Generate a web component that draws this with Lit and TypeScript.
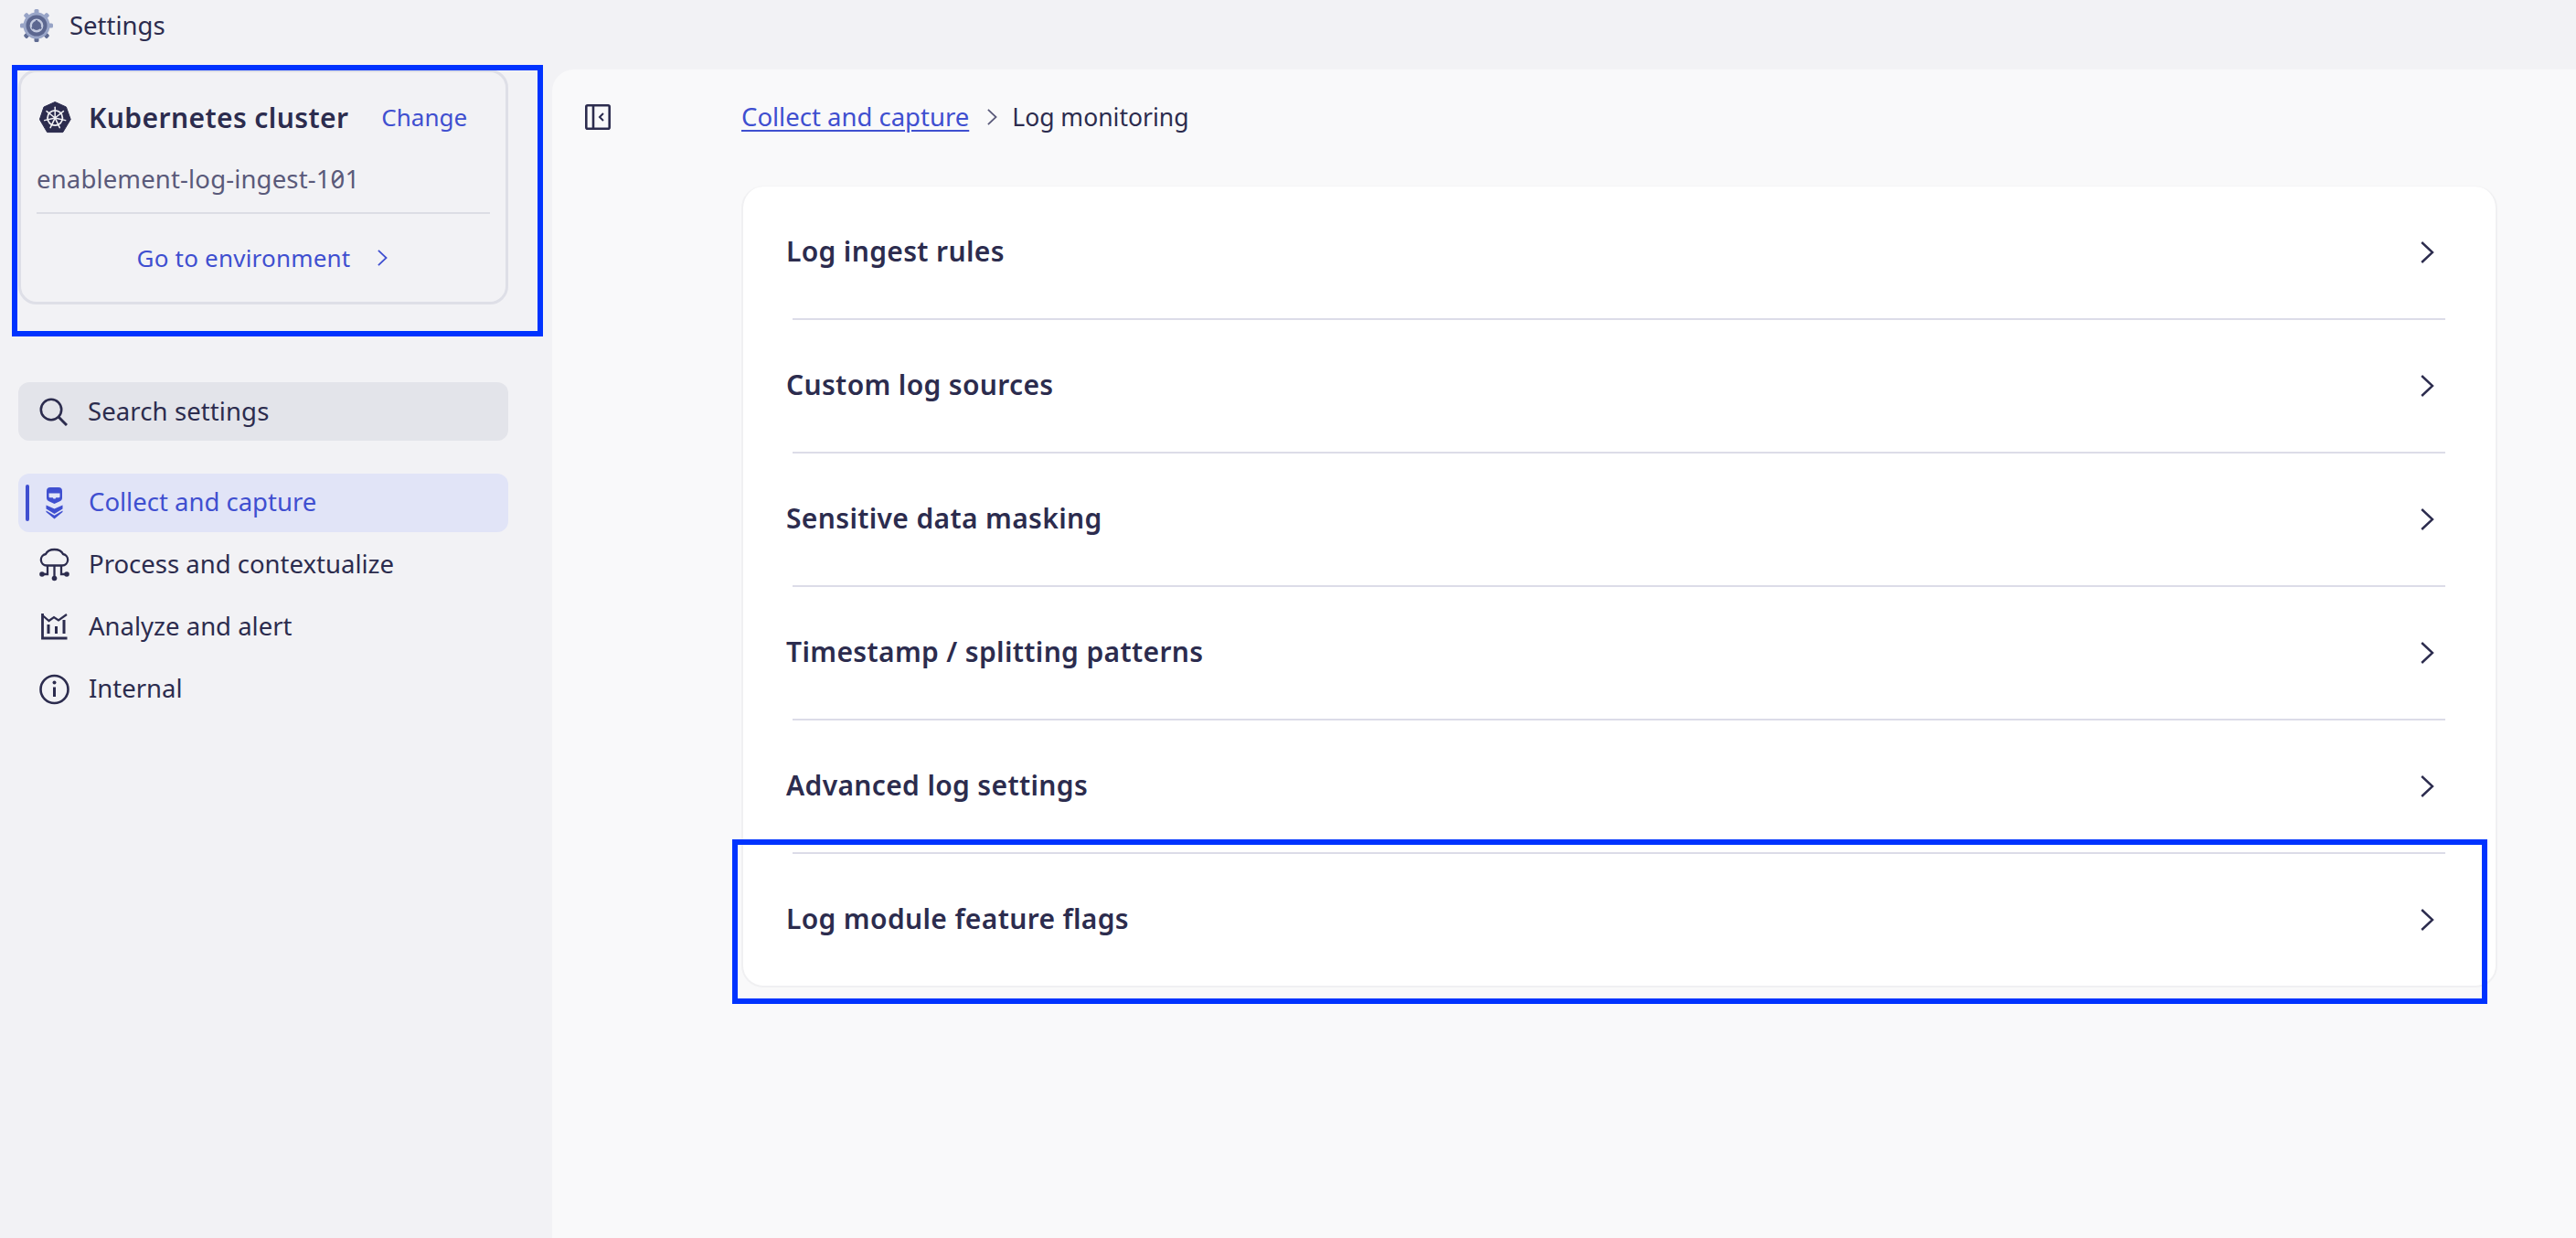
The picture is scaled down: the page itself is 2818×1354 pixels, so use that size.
import { LitElement, html, css, svg } from "lit";
import { customElement } from "lit/decorators.js";

const chevron = (cls: string) => html`<svg class=${cls} viewBox="0 0 15 24" fill="none" stroke="currentColor" stroke-width="2.4"><path d="M1.2 1 L13 12 L1.2 23"/></svg>`;

const gear = svg`<g>
  ${[0, 45, 90, 135, 180, 225, 270, 315].map((a) => svg`<rect x="15.5" y="0" width="5" height="6" rx="1.5" fill=${a > 90 && a < 270 ? "#5f6b92" : "#97a3c6"} transform="rotate(${a} 18 18)"/>`)}
  <circle cx="18" cy="18" r="14.5" fill="#9aa6c8"/>
  <circle cx="18" cy="18" r="11.5" fill="#5c6790"/>
  <circle cx="18" cy="18" r="6.2" fill="none" stroke="#c4cbe0" stroke-width="2.4"/>
  <path d="M18 12v4M12.8 21l3.4-2M23.2 21l-3.4-2" stroke="#5c6790" stroke-width="2.2"/>
</g>`;

const k8s = svg`<path d="M17.2 0.5 L29.4 6 L34.2 19.6 L25.8 33.6 L8.6 33.6 L0.4 19.6 L5 6 Z" fill="#2c2c4e" stroke="#2c2c4e" stroke-linejoin="round"/>
  <circle cx="17.2" cy="18" r="8.2" fill="none" stroke="#f2f2f5" stroke-width="1.8"/>
  <circle cx="17.2" cy="18" r="1.9" fill="#f2f2f5"/>
  <g stroke="#f2f2f5" stroke-width="1.5" stroke-linecap="round">
  ${[0, 51.4, 102.8, 154.3, 205.7, 257.1, 308.6].map((a) => svg`<line x1="17.2" y1="16" x2="17.2" y2="6.2" transform="rotate(${a} 17.2 18)"/>`)}
  </g>`;

const collect = html`<svg class="nav-icon" viewBox="0 0 33 40" fill="currentColor">
  <path fill-rule="evenodd" d="M12 3h9a4 4 0 0 1 4 4v7.500c0 2-1 3-3 4L16.500 21 11 18.500c-2-1-3-2-3-4V7a4 4 0 0 1 4-4zM10.500 9.500v3.500c0 .8.500 1.300 1.300 1.300h3l.7 1.200h2l.7-1.200h3c.8 0 1.300-.5 1.300-1.300V9.500z"/>
  <path d="M7.500 22.500l9 4 9-4v4l-9 5.500-9-5.500z"/>
  <path d="M7.500 28.500l9 5.200 9-5.200v1.500l-9 7.500-9-7.500z"/>
</svg>`;

const cloud = html`<svg class="nav-icon" viewBox="0 0 33 40" fill="none" stroke="currentColor" stroke-width="2.3">
  <path d="M8 20.500A6.300 6.300 0 0 1 7 8C8.500 4.800 12.300 3 16.500 3S24.500 4.800 26 8a6.300 6.300 0 0 1-1 12.500z"/>
  <path d="M16.500 20.500V34M9 20.500V30H3M24 20.500V30h6"/>
  <g fill="currentColor" stroke="none"><circle cx="3" cy="30" r="2.800"/><circle cx="16.500" cy="34.500" r="2.800"/><circle cx="30" cy="30" r="2.800"/></g>
</svg>`;

const chart = html`<svg class="nav-icon" viewBox="0 0 33 40" fill="none" stroke="currentColor" stroke-width="2.400">
  <path d="M3.500 5v27h27" stroke-width="2.800"/>
  <path d="M3.500 7l7 6 5.500-4 5 3.500 9-6.500" stroke-width="2.200"/>
  <path d="M10 17v10M18.500 19v8M27 12v15" stroke-width="3"/>
</svg>`;

const info = html`<svg class="nav-icon" viewBox="0 0 33 40" fill="none" stroke="currentColor" stroke-width="2.600">
  <circle cx="16.500" cy="20" r="15"/>
  <path d="M16.500 17.500V28" stroke-width="3"/>
  <circle cx="16.500" cy="12.500" r="2" fill="currentColor" stroke="none"/>
</svg>`;

const rows = [
  "Log ingest rules",
  "Custom log sources",
  "Sensitive data masking",
  "Timestamp / splitting patterns",
  "Advanced log settings",
  "Log module feature flags",
];

@customElement("app-root")
export class AppRoot extends LitElement {
  static styles = css`
    :host {
      display: block;
      position: relative;
      height: 100vh;
      overflow: hidden;
      background: #f2f2f5;
      color: #2c2c4e;
      font-family: "Noto Sans", sans-serif;
      font-size: 27.5px;
    }
    .top {
      height: 76px;
      box-sizing: border-box;
      display: flex;
      align-items: flex-start;
      padding: 10px 0 0 22px;
      gap: 18px;
    }
    .top svg { width: 36px; height: 36px; flex: none; }
    .top span { line-height: 36px; }
    .body { display: flex; height: calc(100% - 76px); }
    .side {
      width: 604px;
      flex: none;
      box-sizing: border-box;
      padding-left: 20px;
      padding-right: 48px;
    }
    .env {
      height: 257px;
      box-sizing: border-box;
      border: 3px solid #dedfe7;
      border-radius: 20px;
      padding: 29px 17px 0 17px;
    }
    .env-head { display: flex; align-items: center; height: 40px; }
    .env-head svg { width: 35px; height: 35px; margin-left: 3px; flex: none; }
    .env-title { font-weight: 600; font-size: 30px; letter-spacing: 0.4px; margin-left: 19px; white-space: nowrap; }
    .env-change { color: #3f4fd0; font-size: 26px; margin-left: 36px; }
    .env-name { color: #5a5a7a; margin-top: 28px; line-height: 40px; height: 40px; letter-spacing: 0.15px; font-feature-settings: "zero"; }
    .env-line { height: 2px; background: #dcdde4; margin-top: 16px; }
    .env-go {
      display: flex;
      align-items: center;
      justify-content: center;
      color: #3f4fd0;
      font-size: 26px;
      letter-spacing: 0.2px;
      height: 40px;
      margin-top: 28px;
      gap: 30px;
      padding-right: 2px;
    }
    .chev-s { width: 11px; height: 18px; }
    .search {
      margin-top: 85px;
      height: 64px;
      border-radius: 12px;
      background: #e3e4ea;
      display: flex;
      align-items: center;
      padding-left: 23px;
      gap: 22px;
    }
    .search svg { width: 31px; height: 31px; flex: none; }
    .search span, .item span, .row span { margin-bottom: 3px; }
    .search span { letter-spacing: 0.1px; margin-bottom: 2px; }
    .nav { margin-top: 36px; display: flex; flex-direction: column; gap: 4px; }
    .item {
      position: relative;
      height: 64px;
      border-radius: 12px;
      display: flex;
      align-items: center;
      padding-left: 23px;
      gap: 21px;
    }
    .item.active { background: #e1e4f7; color: #3f4fd0; }
    .item.active::before {
      content: "";
      position: absolute;
      left: 8px;
      top: 12px;
      bottom: 12px;
      width: 4px;
      border-radius: 2px;
      background: #3f4fd0;
    }
    .nav-icon { width: 33px; height: 40px; flex: none; }
    .main {
      flex: 1;
      background: #f9f9fa;
      border-top-left-radius: 24px;
      display: flex;
      padding-left: 36px;
    }
    .toggle { width: 171px; flex: none; padding-top: 38px; box-sizing: border-box; }
    .toggle svg { display: block; width: 28px; height: 28px; }
    .content { width: 1921px; flex: none; }
    .crumbs {
      margin-top: 32px;
      height: 40px;
      line-height: 40px;
      display: flex;
      align-items: center;
      white-space: nowrap;
    }
    .crumbs a { color: #3f4fd0; text-decoration: underline; text-underline-offset: 4px; text-decoration-thickness: 2px; }
    .crumbs span { font-size: 26.500px; }
    .crumbs svg { width: 11px; height: 18px; color: #5a5a7a; margin: 0 16px 0 20px; flex: none; }
    .card {
      margin-top: 56px;
      background: #fff;
      border: 2px solid #f0f0f2;
      border-top: 0;
      border-radius: 24px;
      box-shadow: 0 -1px 0 #f5f5f6;
    }
    .row {
      height: 144px;
      display: flex;
      align-items: center;
      justify-content: space-between;
      padding: 0 67px 0 47px;
      font-weight: 600;
      font-size: 30px;
      letter-spacing: 0.35px;
    }
    .row svg { width: 15px; height: 24px; flex: none; }
    .rule { height: 2px; background: #dcdce8; margin: 0 55px 0 54px; }
    .mark { position: absolute; box-sizing: border-box; border: 6px solid #0033ff; pointer-events: none; }
    .mark.a { left: 13px; top: 71px; width: 581px; height: 297px; }
    .mark.b { left: 801px; top: 918px; width: 1920px; height: 180px; }
  `;

  render() {
    return html`
      <div class="top"><svg viewBox="0 0 36 36">${gear}</svg><span>Settings</span></div>
      <div class="body">
        <aside class="side">
          <div class="env">
            <div class="env-head">
              <svg viewBox="0 0 35 35">${k8s}</svg>
              <span class="env-title">Kubernetes cluster</span>
              <span class="env-change">Change</span>
            </div>
            <div class="env-name">enablement-log-ingest-101</div>
            <div class="env-line"></div>
            <div class="env-go"><span>Go to environment</span>${chevron("chev-s")}</div>
          </div>
          <div class="search">
            <svg viewBox="0 0 31 31" fill="none" stroke="currentColor" stroke-width="2.600"><circle cx="13" cy="13" r="11.200"/><path d="M21 21l9 9" stroke-width="3"/></svg>
            <span>Search settings</span>
          </div>
          <nav class="nav">
            <div class="item active">${collect}<span>Collect and capture</span></div>
            <div class="item">${cloud}<span>Process and contextualize</span></div>
            <div class="item">${chart}<span>Analyze and alert</span></div>
            <div class="item">${info}<span>Internal</span></div>
          </nav>
        </aside>
        <main class="main">
          <div class="toggle">
            <svg viewBox="0 0 28 28" fill="none" stroke="currentColor" stroke-width="2.600"><rect x="1.300" y="1.300" width="25.400" height="25.400" rx="1.500"/><path d="M9 1v26" /><path d="M20 10l-4 4 4 4" stroke-width="2"/></svg>
          </div>
          <div class="content">
            <div class="crumbs"><a>Collect and capture</a>${chevron("")}<span>Log monitoring</span></div>
            <div class="card">
              ${rows.map((r, i) => html`
                ${i ? html`<div class="rule"></div>` : ""}
                <div class="row"><span>${r}</span>${chevron("")}</div>
              `)}
            </div>
          </div>
        </main>
      </div>
      <div class="mark a"></div>
      <div class="mark b"></div>
    `;
  }
}
